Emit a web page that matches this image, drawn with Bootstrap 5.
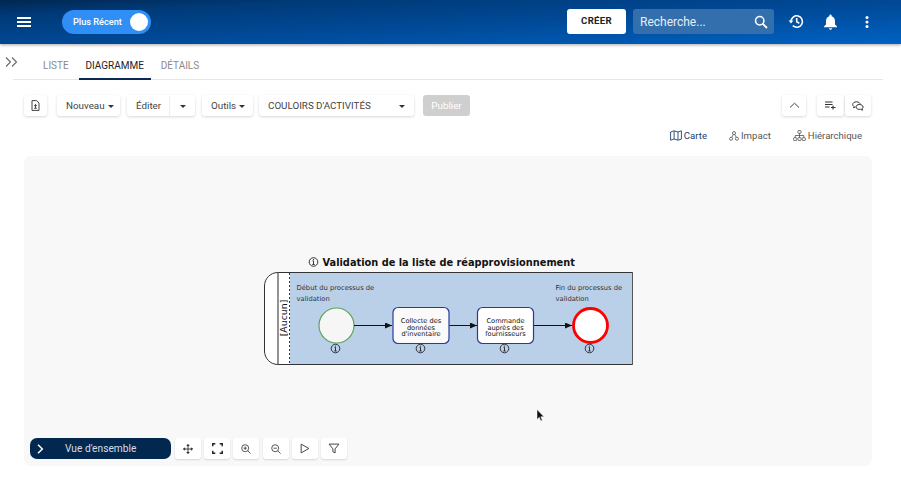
<!DOCTYPE html>
<html lang="fr">
<head>
<meta charset="utf-8">
<title>Diagramme</title>
<link href="https://cdn.jsdelivr.net/npm/bootstrap@5.3.0/dist/css/bootstrap.min.css" rel="stylesheet">
<style>
html,body{height:480px;overflow:hidden}
body{width:901px;font-family:Roboto,"Liberation Sans",sans-serif;background:#fff;color:#333;font-size:11px}
.topbar{height:44px;background:linear-gradient(to right bottom,#01264f 0%,#003a78 18%,#004a98 55%,#0062c2 100%);box-shadow:0 1px 3px rgba(0,0,0,.35);padding:0 32px 1px 17px}
.burger{width:14px;height:10px;border-top:2px solid #fff;border-bottom:2px solid #fff;position:relative;margin-right:31px}
.burger::after{content:"";position:absolute;left:0;right:0;top:2px;height:2px;background:#fff}
.recent{width:89px;height:24px;border-radius:12px;background:#2f8ff6;color:#fff;font-size:9.2px;font-weight:500;padding:0 3px 0 11px}
.recent i{width:18px;height:18px;border-radius:50%;background:#fff;display:block}
.makebtn{width:59px;height:25px;background:#fff;border-radius:3px;font-size:9.6px;font-weight:700;color:#222;letter-spacing:.3px;margin-right:7px}
.finder{width:141px;height:25px;border-radius:3px;background:#336ead;color:#e6eef8;font-size:12px;padding:0 6px 0 7px;margin-right:14px}
.hicon{color:#fff}
.tabrow{height:36px;margin:0 18px 0 13px;border-bottom:1px solid #e6e6e6;padding-left:20px;gap:0}
.tabitem{font-size:10px;color:#8a8a8a;height:36px;padding:0 9px;line-height:43px}
.tabitem.on{color:#222;border-bottom:2px solid #0b2a55;height:36px;width:72px;padding:0;text-align:center;margin:0 1px 0 0}
.tabitem.first{padding:0 10px 0 10px}
.expand{position:absolute;left:5px;top:56px}
.tools{height:21px;margin:15px 30px 0 24px;gap:7px}
.tbtn{height:21px;background:#fff;border-radius:3px;box-shadow:0 1px 3px rgba(0,0,0,.16);font-size:9.8px;color:#444;padding:1px 7px 0;white-space:nowrap}
.tri{width:0;height:0;border:3.5px solid transparent;border-top-color:#333;border-bottom:0;margin-left:3px;display:inline-block}
.split{width:1px;align-self:stretch;background:#eee}
.publishbtn{width:47px;background:#cfcfcf;color:#fff;box-shadow:none;justify-content:center;margin-left:2px}
.viewrow{height:18px;margin:11px 39px 0 0;gap:22px;font-size:9.6px;color:#555}
.viewitem{gap:2px}
.viewitem.on{color:#23416b}
.canvasbox{position:absolute;left:24px;top:156px;width:848px;height:310px;background:#f8f8f8;border-radius:7px}
.canvasbox svg.dia{display:block}
.dia text{font-family:"DejaVu Sans",sans-serif}
.overlay{position:absolute;left:6px;bottom:7px;gap:3px}
.overview{width:141px;height:21px;border-radius:7px;background:#03284f;color:#d5deea;font-size:10.2px;padding-left:7px;margin-right:1px}
.overview span{margin-left:21px}
.sqbtn{width:26px;height:21px;background:#fff;border-radius:3px;box-shadow:0 1px 2px rgba(0,0,0,.14)}
.sqgap{margin-left:1px}
.cursorpin{position:absolute;left:536px;top:409px}
</style>
</head>
<body>
<header class="topbar d-flex align-items-center">
  <div class="burger"></div>
  <div class="recent d-flex align-items-center justify-content-between"><span>Plus Récent</span><i></i></div>
  <div class="ms-auto d-flex align-items-center">
    <div class="makebtn d-flex align-items-center justify-content-center">CRÉER</div>
    <div class="finder d-flex align-items-center justify-content-between"><span>Recherche...</span>
      <svg width="14" height="14" viewBox="0 0 14 14" fill="none" stroke="#fff" stroke-width="1.5"><circle cx="5.7" cy="5.7" r="4.2"/><path d="M8.8 8.8l4.2 4.2" stroke-width="1.8"/></svg>
    </div>
    <svg class="hicon" width="16" height="15" viewBox="0 0 16 15" fill="none" stroke="#fff" stroke-width="1.6"><path d="M3 7.5a5.7 5.7 0 1 1 1.8 4.2"/><path d="M0.6 6.6h4.8L3 9.4z" fill="#fff" stroke="none"/><path d="M8.7 4v3.8l2.6 1.5"/></svg>
    <svg class="hicon" style="margin-left:19px" width="15" height="16" viewBox="0 0 14 16" fill="#fff"><path d="M7 0.5a1.1 1.1 0 0 1 1.1 1.1v.6C10.400 2.800 11.500 4.700 11.500 7v3.500L13.500 12.500v.8H.5v-.8L2.500 10.500V7c0-2.300 1.100-4.200 3.400-4.800v-.6A1.100 1.100 0 0 1 7 .5z"/><path d="M5.500 14.300h3a1.500 1.500 0 0 1-3 0z"/></svg>
    <svg class="hicon" style="margin-left:27px" width="4" height="12" viewBox="0 0 4 12" fill="#fff"><circle cx="2" cy="1.500" r="1.500"/><circle cx="2" cy="6" r="1.500"/><circle cx="2" cy="10.500" r="1.500"/></svg>
  </div>
</header>

<svg class="expand" width="14" height="12" viewBox="0 0 14 12" fill="none" stroke="#666" stroke-width="1.100"><path d="M1 1.500L5.500 6L1 10.500M7 1.500L11.500 6L7 10.500"/></svg>
<nav class="tabrow d-flex align-items-start">
  <div class="tabitem first">LISTE</div>
  <div class="tabitem on">DIAGRAMME</div>
  <div class="tabitem">DÉTAILS</div>
</nav>

<div class="tools d-flex align-items-center">
  <div class="tbtn d-flex align-items-center" style="width:23px;margin-right:3px;justify-content:center;padding:0">
    <svg width="9" height="11" viewBox="0 0 9 11" fill="none" stroke="#444" stroke-width="1"><path d="M1 .6h4.700L8 3v7.400H1z"/><path d="M3.200 8.200h2.600M4.500 8V4.600" stroke-width="1.100"/><path d="M3.200 6l1.300-1.500L5.800 6" stroke-width=".9"/></svg>
  </div>
  <div class="tbtn d-flex align-items-center" style="width:63px;padding-left:9px">Nouveau<span class="tri"></span></div>
  <div class="tbtn d-flex align-items-center" style="width:68px;padding:1px 0 0 9px">Éditer<span class="split" style="margin-left:8px"></span><span class="tri" style="margin-left:10px"></span></div>
  <div class="tbtn d-flex align-items-center" style="width:51px;padding-left:9px">Outils<span class="tri"></span></div>
  <div class="tbtn d-flex align-items-center justify-content-between" style="width:155px;margin-left:-1px;padding:1px 9px 0">COULOIRS D'ACTIVITÉS<span class="tri"></span></div>
  <div class="tbtn d-flex align-items-center publishbtn">Publier</div>
  <div class="ms-auto d-flex align-items-center">
    <div class="tbtn d-flex align-items-center justify-content-center" style="width:24px;margin-right:11px;padding:0"><svg width="11" height="7" viewBox="0 0 11 7" fill="none" stroke="#444"><path d="M1 5.500L5.500 1.200L10 5.500"/></svg></div>
    <div class="tbtn d-flex align-items-center justify-content-center" style="width:27px;padding:0;margin-right:1px"><svg width="11" height="9" viewBox="0 0 11 9" fill="none" stroke="#333" stroke-width="1.100"><path d="M0 1h7.500M0 3.500h7.500M0 6h4.500M8 4.500v4M6 6.500h4.500"/></svg></div>
    <div class="tbtn d-flex align-items-center justify-content-center" style="width:26px;padding:0"><svg width="12" height="10" viewBox="0 0 12 10" fill="none" stroke="#333"><path d="M4.500.8C2.300.8.700 2 .700 3.500c0 .8.500 1.500 1.200 2l-.4 1.200 1.800-.7"/><path d="M4.500.8c2.200 0 3.700 1.200 3.700 2.700"/><path d="M7.300 3.500c2 0 3.800 1 3.800 2.500 0 .8-.4 1.400-1 1.800l.4 1.400-1.900-.9c-2.300.3-4.600-.6-4.600-2.300 0-1.500 1.400-2.500 3.300-2.500z"/></svg></div>
  </div>
</div>

<div class="viewrow d-flex align-items-center justify-content-end">
  <div class="viewitem on d-flex align-items-center"><svg width="12" height="11" viewBox="0 0 12 11" fill="none" stroke="#23416b" stroke-width=".9"><path d="M.6 2l3.500-1.200L8 2l3.400-1.200v8.300L8 10.200 4.100 9 .6 10.200zM4.100 1v8M8 2v8"/></svg>Carte</div>
  <div class="viewitem d-flex align-items-center"><svg width="10" height="10" viewBox="0 0 11 11" fill="none" stroke="#555" stroke-width=".9"><circle cx="5.500" cy="2.300" r="1.700"/><circle cx="2.300" cy="8.500" r="1.700"/><circle cx="8.700" cy="8.500" r="1.700"/><path d="M4.700 3.800L3 7M6.300 3.800L8 7"/></svg>Impact</div>
  <div class="viewitem d-flex align-items-center"><svg width="13" height="11" viewBox="0 0 14 12" fill="none" stroke="#555" stroke-width=".9"><rect x="5.300" y=".6" width="3.400" height="3" rx=".6"/><rect x=".6" y="8.400" width="3.400" height="3" rx=".6"/><rect x="5.300" y="8.400" width="3.400" height="3" rx=".6"/><rect x="10" y="8.400" width="3.400" height="3" rx=".6"/><path d="M7 3.600v4.800M2.300 8.400V6h9.400v2.400"/></svg>Hiérarchique</div>
</div>

<main class="canvasbox">
  <svg class="dia" width="848" height="310" viewBox="24 156 848 310">
    <defs>
      <g id="inf"><circle r="4.300" fill="none" stroke="#222" stroke-width=".9"/><path d="M0-1.200V2.500M-1.200 2.500H1.200M-1-1.200H0" stroke="#222" stroke-width=".9" fill="none"/><circle cy="-2.500" r=".6" fill="#222"/></g>
      <marker id="arw" markerWidth="8" markerHeight="7" refX="7" refY="3" orient="auto" markerUnits="userSpaceOnUse"><path d="M0 0L7 3L0 6z" fill="#111"/></marker>
    </defs>
    <use href="#inf" transform="translate(313.500 262)"/>
    <text x="322.500" y="266" font-size="9.800" font-weight="700" fill="#111">Validation de la liste de réapprovisionnement</text>
    <path d="M278 272.500H632.500V364.500H278C270 364.500 264.500 358 264.500 351V286C264.500 279 270 272.500 278 272.500Z" fill="#fff" stroke="#333"/>
    <rect x="290" y="273" width="342" height="91" fill="#bad0e9"/>
    <path d="M632.500 272.500V364.500" stroke="#555"/>
    <path d="M278 272.500V364.500" stroke="#666" stroke-width="1.400"/>
    <path d="M289.500 273V364" stroke="#333" stroke-dasharray="2 2"/>
    <text transform="translate(287 318) rotate(-90)" text-anchor="middle" font-size="9.400" fill="#111">[Aucun]</text>
    <text font-size="6.750" fill="#333"><tspan x="296.500" y="290">Début du processus de</tspan><tspan x="296.500" y="301">validation</tspan></text>
    <text font-size="6.750" fill="#333"><tspan x="555.500" y="290">Fin du processus de</tspan><tspan x="555.500" y="301">validation</tspan></text>
    <circle cx="336.500" cy="325.500" r="17.500" fill="#f6f6f6" stroke="#5aa45a" stroke-width="1.200"/>
    <rect x="393" y="307.500" width="56" height="36" rx="5" fill="#fafafa" stroke="#2b3a9a" stroke-width="1.200"/>
    <text font-size="6.600" fill="#111" text-anchor="middle"><tspan x="421" y="323">Collecte des</tspan><tspan x="421" y="329.500">données</tspan><tspan x="421" y="336">d'inventaire</tspan></text>
    <rect x="477.500" y="307.500" width="56" height="36" rx="5" fill="#fff" stroke="#2b3a9a" stroke-width="1.200"/>
    <text font-size="6.600" fill="#111" text-anchor="middle"><tspan x="505.500" y="323">Commande</tspan><tspan x="505.500" y="329.500">auprès des</tspan><tspan x="505.500" y="336">fournisseurs</tspan></text>
    <circle cx="590.500" cy="325.500" r="17" fill="#fff" stroke="#f00" stroke-width="2.800"/>
    <path d="M354 325.500H392" stroke="#111" marker-end="url(#arw)"/>
    <path d="M449.500 325.500H477" stroke="#111" marker-end="url(#arw)"/>
    <path d="M534 325.500H572" stroke="#111" marker-end="url(#arw)"/>
    <use href="#inf" transform="translate(335.500 348.500)"/>
    <use href="#inf" transform="translate(420.500 348.500)"/>
    <use href="#inf" transform="translate(504.500 348.500)"/>
    <use href="#inf" transform="translate(589.500 348.500)"/>
  </svg>
  <div class="overlay d-flex align-items-center">
    <div class="overview d-flex align-items-center">
      <svg width="7" height="10" viewBox="0 0 7 10" fill="none" stroke="#fff" stroke-width="1.500"><path d="M1 .8L5.300 5L1 9.200"/></svg>
      <span>Vue d'ensemble</span>
    </div>
    <div class="sqbtn d-flex align-items-center justify-content-center"><svg width="10" height="10" viewBox="0 0 10 10" fill="#333" stroke="#333" stroke-width=".9"><path d="M5 .5v9M.5 5h9" fill="none"/><path d="M3.800 1.700L5 .5l1.200 1.200zM3.800 8.300L5 9.500l1.200-1.200zM1.700 3.800L.5 5l1.200 1.200zM8.300 3.800L9.500 5 8.300 6.200z"/></svg></div>
    <div class="sqbtn d-flex align-items-center justify-content-center"><svg width="11" height="11" viewBox="0 0 10 10" fill="none" stroke="#222" stroke-width="1.300"><path d="M.7 3V.7H3M7 .7h2.300V3M.7 7v2.300H3M7 9.300h2.300V7"/></svg></div>
    <div class="sqbtn d-flex align-items-center justify-content-center"><svg width="10" height="10" viewBox="0 0 10 10" fill="none" stroke="#444" stroke-width=".9"><circle cx="4.200" cy="4.200" r="3.500"/><path d="M6.800 6.800L9.600 9.600M4.200 2.500v3.400M2.500 4.200h3.400"/></svg></div>
    <div class="sqbtn sqgap d-flex align-items-center justify-content-center"><svg width="10" height="10" viewBox="0 0 10 10" fill="none" stroke="#444" stroke-width=".9"><circle cx="4.200" cy="4.200" r="3.500"/><path d="M6.800 6.800L9.600 9.600M2.500 4.200h3.400"/></svg></div>
    <div class="sqbtn d-flex align-items-center justify-content-center"><svg width="10" height="11" viewBox="0 0 9 10" fill="none" stroke="#444" stroke-width=".9"><path d="M1 1l7 4-7 4z"/></svg></div>
    <div class="sqbtn d-flex align-items-center justify-content-center"><svg width="12" height="11" viewBox="0 0 10 10" fill="none" stroke="#444" stroke-width=".9"><path d="M.5 1h9L6 5.300V9L4 8V5.300z"/></svg></div>
  </div>
</main>
<svg class="cursorpin" width="9" height="13" viewBox="0 0 9 13"><path d="M1 .5v10l2.300-2.200 1.500 3.600 1.500-.6L4.800 7.800H8z" fill="#111" stroke="#fff" stroke-width=".5"/></svg>
<script src="https://cdn.jsdelivr.net/npm/bootstrap@5.3.0/dist/js/bootstrap.bundle.min.js"></script>
</body>
</html>
